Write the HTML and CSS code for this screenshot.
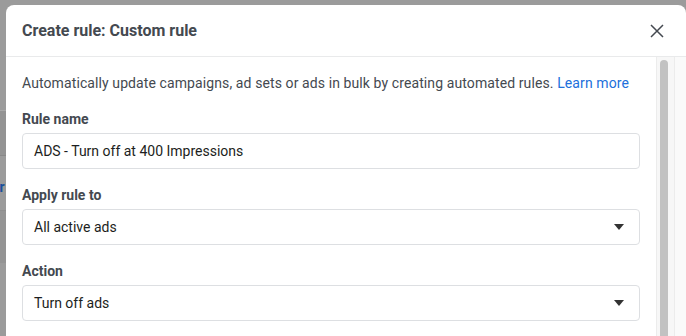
FILE: index.html
```html
<!DOCTYPE html>
<html>
<head>
  <title>Create rule</title>
  <meta name="viewport" content="width=device-width, initial-scale=1">
  <link rel="stylesheet" href="styles.css">
</head>
<body>
  <div class="page">
    <!-- Pagina por baixo do modal, escurecida -->
    <div class="backdrop">
      <div class="band band-top"></div>
      <div class="band band-mid"></div>
      <div class="band band-link">er</div>
      <div class="band band-low"></div>
    </div>

    <div class="modal">
      <div class="modal-header">
        <h2 class="modal-title">Create rule: Custom rule</h2>
        <button class="close" aria-label="Close">
          <svg width="14" height="14" viewBox="0 0 14 14">
            <path d="M1 1 L13 13 M13 1 L1 13" stroke="#444950" stroke-width="1.5" fill="none"/>
          </svg>
        </button>
      </div>

      <div class="modal-body">
        <div class="content">
          <p class="intro">Automatically update campaigns, ad sets or ads in bulk by creating automated rules. <a href="#">Learn more</a></p>

          <div class="field">
            <label class="label">Rule name</label>
            <div class="input">ADS - Turn off at 400 Impressions</div>
          </div>

          <div class="field">
            <label class="label">Apply rule to</label>
            <div class="input select">
              <span>All active ads</span>
              <span class="caret"></span>
            </div>
          </div>

          <div class="field">
            <label class="label">Action</label>
            <div class="input select">
              <span>Turn off ads</span>
              <span class="caret"></span>
            </div>
          </div>
        </div>

        <div class="scrollbar">
          <div class="thumb"></div>
        </div>
        <div class="gutter"></div>
      </div>
    </div>
  </div>
</body>
</html>
```

FILE: styles.css
```css
/* Estilos gerais */
body {
  margin: 0;
  background: #9b9b9b;
  font-family: Roboto, "Liberation Sans", sans-serif;
  overflow: hidden;
}

.page {
  display: flex;
  height: 336px;
}

/* Fundo escurecido */
.backdrop {
  width: 6px;
  flex-shrink: 0;
  display: flex;
  flex-direction: column;
  overflow: hidden;
}

.band {
  background: #9b9b9b;
  flex-shrink: 0;
}

.band-top {
  height: 110px;
  border-bottom: 1px solid #a8a8a8;
}

.band-mid {
  height: 44px;
  background: #939393;
  border-bottom: 1px solid #888;
}

.band-link {
  height: 54px;
  color: #1a4f9c;
  font-size: 14px;
  font-weight: bold;
  line-height: 62px;
  text-indent: -8px;
  border-bottom: 1px solid #8e8e8e;
}

.band-low {
  height: 52px;
  background: #949494;
}

/* Modal */
.modal {
  flex: 1;
  margin-top: 5px;
  background: #fff;
  border-radius: 8px 8px 0 0;
  display: flex;
  flex-direction: column;
  overflow: hidden;
}

.modal-header {
  height: 51px;
  flex-shrink: 0;
  border-bottom: 1px solid #e9eaeb;
  display: flex;
  align-items: center;
  justify-content: space-between;
  padding: 0 22px 0 16px;
}

.modal-title {
  margin: 0;
  font-size: 16px;
  font-weight: bold;
  color: #444950;
}

.close {
  border: 0;
  background: none;
  padding: 0;
  width: 14px;
  height: 14px;
  display: flex;
}

.modal-body {
  flex: 1;
  display: flex;
  overflow: hidden;
}

.content {
  width: 618px;
  padding: 16px;
  flex-shrink: 0;
}

.intro {
  margin: 0 0 16px;
  font-size: 14px;
  letter-spacing: 0.1px;
  line-height: 20px;
  color: #444950;
}

.intro a {
  color: #216fdb;
  text-decoration: none;
}

.field {
  margin-bottom: 16px;
}

.label {
  display: block;
  font-size: 14px;
  font-weight: bold;
  line-height: 20px;
  color: #444950;
  margin-bottom: 4px;
}

.input {
  height: 34px;
  border: 1px solid #dddfe2;
  border-radius: 4px;
  padding: 0 15px 0 11px;
  display: flex;
  align-items: center;
  justify-content: space-between;
  font-size: 14px;
  color: #1c1e21;
}

.caret {
  width: 0;
  height: 0;
  border-left: 5px solid transparent;
  border-right: 5px solid transparent;
  border-top: 6px solid #333;
}

/* Barra de rolagem */
.scrollbar {
  width: 14px;
  flex-shrink: 0;
  border-left: 1px solid #ececec;
  border-right: 1px solid #ececec;
  background: #f7f7f7;
  padding: 3px 0 0 3px;
}

.thumb {
  width: 8px;
  height: 300px;
  background: #c2c2c2;
  border-radius: 4px;
}

.gutter {
  flex: 1;
  background: #fafafa;
}
```
